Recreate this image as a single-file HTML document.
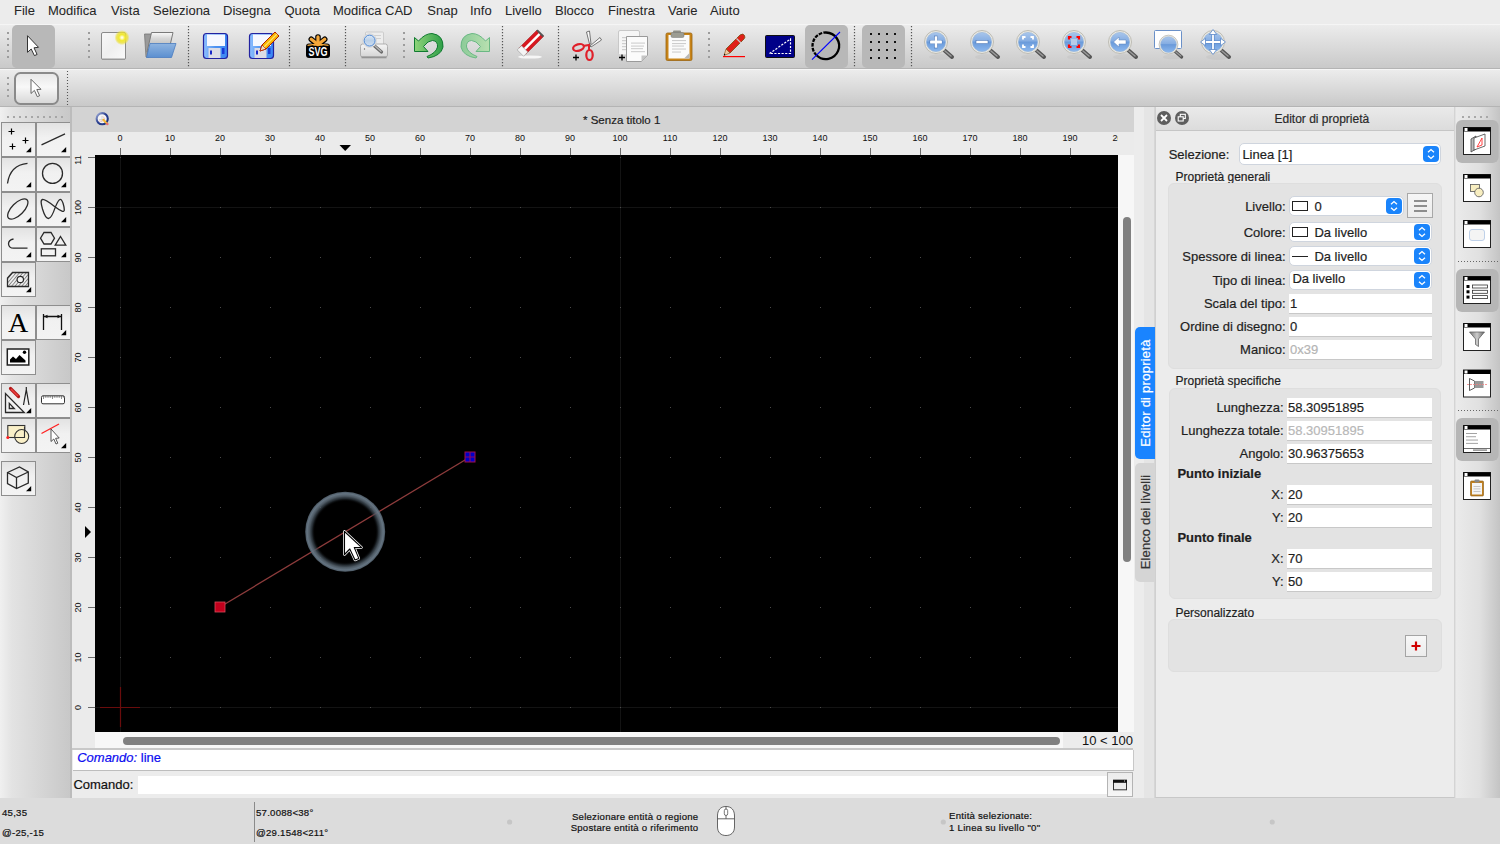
<!DOCTYPE html>
<html><head><meta charset="utf-8">
<style>
*{margin:0;padding:0;box-sizing:border-box}
html,body{width:1500px;height:844px;overflow:hidden;background:#ececec;font-family:"Liberation Sans",sans-serif;color:#222;-webkit-text-stroke:0.2px}
.a{position:absolute}
#menubar{left:0;top:0;width:1500px;height:24px;background:#ececec}
#menubar span{position:absolute;top:3px;font-size:13px;color:#262626;line-height:16px;-webkit-text-stroke:0.05px}
#tb1{left:0;top:24px;width:1500px;height:46px;background:linear-gradient(#f5f5f5 0,#f5f5f5 1px,#ececec 1px,#c9c9c9 44px,#b4b4b4 44px,#b4b4b4 45px,#f6f6f6 45px)}
#tb2{left:0;top:70px;width:1500px;height:37px;background:linear-gradient(#ececec 0,#c9c9c9 36px,#b4b4b4 36px)}
.hdl{position:absolute;width:2px;background:repeating-linear-gradient(#9a9a9a 0 2px,transparent 2px 6px)}
.vsep{position:absolute;width:1px;background:repeating-linear-gradient(#888 0 1px,transparent 1px 3px)}
#leftp{left:0;top:107px;width:72px;height:691px;background:linear-gradient(90deg,#f0f0f0 0,#e3e3e3 12px,#d6d6d6 40px,#c8c8c8 70px,#b8b8b8 70px,#b8b8b8 72px)}
.tbtn{position:absolute;width:35px;height:35px;border:1px solid #8f8f8f;background:linear-gradient(#e6e6e6,#f4f4f4 50%,#f2f2f2)}
.tri{position:absolute;right:3px;bottom:3px;width:0;height:0;border-left:8px solid transparent;border-bottom:8px solid #000}
#doc{left:72px;top:107px;width:1062px;height:691px;background:#ececec}
#doctitle{left:72px;top:107px;width:1062px;height:24px;background:#d4d4d4;font-size:12px;text-align:center;line-height:24px;color:#222}
#canvas{left:95px;top:155px;width:1023px;height:577px;background:#000;overflow:hidden}
#status{left:0;top:798px;width:1500px;height:46px;background:#dcdcdc}
.st{position:absolute;font-size:9.6px;color:#111;line-height:12px;white-space:nowrap;letter-spacing:0.25px}
#sidetabs{left:1134px;top:107px;width:21px;height:691px;background:linear-gradient(90deg,#ececec 0,#ececec 10px,#e4e4e4 10px)}
#prop{left:1155px;top:107px;width:300px;height:691px;background:#ececec;border-left:1px solid #d2d2d2;border-right:1px solid #d2d2d2}
#rtb{left:1455px;top:107px;width:45px;height:691px;background:linear-gradient(90deg,#ececec,#dcdcdc 70%,#c8c8c8)}
</style></head><body>
<div id="menubar" class="a">
<span style="left:14px">File</span><span style="left:48px">Modifica</span><span style="left:111px">Vista</span><span style="left:153px">Seleziona</span><span style="left:223px">Disegna</span><span style="left:284.5px">Quota</span><span style="left:333px">Modifica CAD</span><span style="left:427.3px">Snap</span><span style="left:470px">Info</span><span style="left:505px">Livello</span><span style="left:555px">Blocco</span><span style="left:608px">Finestra</span><span style="left:668px">Varie</span><span style="left:710px">Aiuto</span>
</div>
<div id="tb1" class="a"></div>
<svg class="a" style="left:0;top:24px" width="1500" height="45" viewBox="0 24 1500 45">
<defs>
<linearGradient id="lensg" x1="0" y1="0" x2="0" y2="1"><stop offset="0" stop-color="#a9c6ec"/><stop offset="0.45" stop-color="#85ade2"/><stop offset="0.5" stop-color="#6a9ada"/><stop offset="1" stop-color="#8cb8ee"/></linearGradient>
<linearGradient id="flopg" x1="0" y1="0" x2="1" y2="0"><stop offset="0" stop-color="#8ec0ff"/><stop offset="0.5" stop-color="#4f92f0"/><stop offset="1" stop-color="#3a86f4"/></linearGradient>
<linearGradient id="folderg" x1="0" y1="0" x2="0" y2="1"><stop offset="0" stop-color="#8fb4e0"/><stop offset="1" stop-color="#5b8fd0"/></linearGradient>
<linearGradient id="greeng" x1="0" y1="0" x2="1" y2="0"><stop offset="0" stop-color="#8fd47a"/><stop offset="1" stop-color="#2f9f48"/></linearGradient>
<linearGradient id="greeng2" x1="0" y1="0" x2="1" y2="0"><stop offset="0" stop-color="#8ccb98"/><stop offset="1" stop-color="#b8e0b0"/></linearGradient>
<radialGradient id="yel"><stop offset="0" stop-color="#ffffff"/><stop offset="0.12" stop-color="#fffbd0"/><stop offset="0.4" stop-color="#f2ea30"/><stop offset="0.72" stop-color="#ece030" stop-opacity="0.75"/><stop offset="1" stop-color="#ece030" stop-opacity="0"/></radialGradient><linearGradient id="papg" x1="0" y1="0" x2="0" y2="1"><stop offset="0" stop-color="#fafafa"/><stop offset="0.3" stop-color="#d8d8d8"/><stop offset="1" stop-color="#a8a8a8"/></linearGradient><linearGradient id="pageg" x1="0" y1="0" x2="1" y2="1"><stop offset="0" stop-color="#f8f8f8"/><stop offset="0.5" stop-color="#efefef"/><stop offset="1" stop-color="#fafafa"/></linearGradient>
</defs>
<rect x="7" y="32" width="2" height="2" fill="#9c9c9c"/>
<rect x="7" y="38" width="2" height="2" fill="#9c9c9c"/>
<rect x="7" y="44" width="2" height="2" fill="#9c9c9c"/>
<rect x="7" y="50" width="2" height="2" fill="#9c9c9c"/>
<rect x="7" y="56" width="2" height="2" fill="#9c9c9c"/>
<rect x="88" y="32" width="2" height="2" fill="#9c9c9c"/>
<rect x="88" y="38" width="2" height="2" fill="#9c9c9c"/>
<rect x="88" y="44" width="2" height="2" fill="#9c9c9c"/>
<rect x="88" y="50" width="2" height="2" fill="#9c9c9c"/>
<rect x="88" y="56" width="2" height="2" fill="#9c9c9c"/>
<rect x="403" y="32" width="2" height="2" fill="#9c9c9c"/>
<rect x="403" y="38" width="2" height="2" fill="#9c9c9c"/>
<rect x="403" y="44" width="2" height="2" fill="#9c9c9c"/>
<rect x="403" y="50" width="2" height="2" fill="#9c9c9c"/>
<rect x="403" y="56" width="2" height="2" fill="#9c9c9c"/>
<rect x="708" y="32" width="2" height="2" fill="#9c9c9c"/>
<rect x="708" y="38" width="2" height="2" fill="#9c9c9c"/>
<rect x="708" y="44" width="2" height="2" fill="#9c9c9c"/>
<rect x="708" y="50" width="2" height="2" fill="#9c9c9c"/>
<rect x="708" y="56" width="2" height="2" fill="#9c9c9c"/>
<line x1="188.5" y1="26" x2="188.5" y2="67" stroke="#555" stroke-width="1.2" stroke-dasharray="1.2 1.8"/>
<line x1="289.5" y1="26" x2="289.5" y2="67" stroke="#555" stroke-width="1.2" stroke-dasharray="1.2 1.8"/>
<line x1="345.5" y1="26" x2="345.5" y2="67" stroke="#555" stroke-width="1.2" stroke-dasharray="1.2 1.8"/>
<line x1="502.5" y1="26" x2="502.5" y2="67" stroke="#555" stroke-width="1.2" stroke-dasharray="1.2 1.8"/>
<line x1="558.5" y1="26" x2="558.5" y2="67" stroke="#555" stroke-width="1.2" stroke-dasharray="1.2 1.8"/>
<line x1="854.5" y1="26" x2="854.5" y2="67" stroke="#555" stroke-width="1.2" stroke-dasharray="1.2 1.8"/>
<line x1="911.5" y1="26" x2="911.5" y2="67" stroke="#555" stroke-width="1.2" stroke-dasharray="1.2 1.8"/>
<rect x="12" y="25" width="43" height="43.3" rx="5" fill="#b8b8b8"/>
<rect x="805" y="25" width="43" height="43" rx="5" fill="#b8b8b8"/>
<rect x="862" y="25" width="43" height="43" rx="5" fill="#b8b8b8"/>
<path d="M27.5 35.7 V52.3 L31.2 49 L34.4 55.6 L37.1 54.5 L34 47.8 L38.5 47.3 Z" fill="#fff" stroke="#333" stroke-width="1" stroke-linejoin="round"/>
<rect x="101.5" y="32.5" width="24" height="27" rx="1.5" fill="url(#pageg)" stroke="#8a8a8a" stroke-width="1"/>
<rect x="102.5" y="58.5" width="22" height="1.5" fill="#9a9a9a"/>
<circle cx="122" cy="37.6" r="7.6" fill="url(#yel)"/>
<path d="M144.5 34 L153 34 L149 57 L146 57 Z" fill="#9a9a9a" stroke="#777" stroke-width="0.8"/>
<path d="M151.5 32.5 L173 32.5 L169 50 L147 52 Z" fill="url(#papg)" stroke="#7a7a7a" stroke-width="1"/>

<path d="M150 43.5 L176 43.5 L171.5 57.5 L146.5 57.5 Z" fill="url(#folderg)" stroke="#4a7cc0" stroke-width="0.8"/>
<rect x="203.5" y="33.5" width="24" height="25" rx="3" fill="url(#flopg)" stroke="#2222a0" stroke-width="1.2"/>
<rect x="207" y="34.5" width="18" height="11.5" fill="#f6f8ff"/>
<rect x="208.5" y="48" width="12" height="10" fill="#dcdce6"/>
<rect x="210" y="50.5" width="2" height="4" fill="#1a28c8"/>
<rect x="222" y="48" width="2.5" height="6" fill="#1a3ad8"/>
<rect x="249.5" y="33.5" width="24" height="25" rx="3" fill="url(#flopg)" stroke="#2222a0" stroke-width="1.2"/>
<rect x="253" y="34.5" width="18" height="11.5" fill="#f6f8ff"/>
<rect x="254.5" y="48" width="12" height="10" fill="#dcdce6"/>
<rect x="256" y="50.5" width="2" height="4" fill="#1a28c8"/>
<rect x="268" y="48" width="2.5" height="6" fill="#1a3ad8"/>
<path d="M260 51 L262 45 L275 32 L279 36 L266 49 Z" fill="#f7b500" stroke="#b02000" stroke-width="1"/>
<path d="M262 45 L266 49 L260 51 Z" fill="#f0dcc0" stroke="#b02000" stroke-width="0.8"/>
<path d="M264 47 L277 34" stroke="#ffe070" stroke-width="1.2"/>
<rect x="306" y="43.5" width="24" height="14.5" rx="3" fill="#000"/>
<g stroke="#000" stroke-width="5.6" stroke-linecap="round"><line x1="318" y1="45" x2="318" y2="37"/><line x1="318" y1="45" x2="311.3" y2="39.3"/><line x1="318" y1="45" x2="324.7" y2="39.3"/></g>
<g stroke="#f5a83a" stroke-width="3.3" stroke-linecap="round"><line x1="318" y1="44.5" x2="318" y2="37"/><line x1="318" y1="44.5" x2="311.3" y2="39.3"/><line x1="318" y1="44.5" x2="324.7" y2="39.3"/></g>
<g stroke="#f5a83a" stroke-width="1.6" stroke-linecap="round"><line x1="318" y1="45" x2="314" y2="45"/><line x1="318" y1="45" x2="322" y2="45"/></g>
<path d="M307.5 45.3 Q318 43.3 328.5 45.3" stroke="#f5a83a" stroke-width="1.3" fill="none"/>
<text x="318" y="56.2" font-family="Liberation Sans" font-weight="bold" font-size="11" fill="#fff" text-anchor="middle" transform="translate(318 56) scale(0.82 1.12) translate(-318 -56)">SVG</text>
<!-- pp --><defs><linearGradient id="prg" x1="0" y1="0" x2="0" y2="1"><stop offset="0" stop-color="#f6f6f6"/><stop offset="1" stop-color="#d4d4d4"/></linearGradient>
<linearGradient id="pplens" x1="0" y1="0" x2="0" y2="1"><stop offset="0" stop-color="#dce8f6"/><stop offset="0.5" stop-color="#b8cfe8"/><stop offset="1" stop-color="#d0e0f2"/></linearGradient></defs>
<rect x="365.5" y="32" width="18" height="14" rx="1" fill="#ededed" stroke="#c4c4c4" stroke-width="0.8"/>
<rect x="368" y="35" width="13" height="1" fill="#d0d0d0"/><rect x="368" y="38" width="13" height="1" fill="#d0d0d0"/>
<path d="M362.5 44 H385.5 Q387.5 44 387.5 46.5 V55 Q387.5 57 385.5 57 H362.5 Q360.5 57 360.5 55 V46.5 Q360.5 44 362.5 44 Z" fill="url(#prg)" stroke="#a8a8a8" stroke-width="0.9"/>
<rect x="361.5" y="56.5" width="25" height="1.8" fill="#8a8a8a" opacity="0.8"/>
<circle cx="364.5" cy="49" r="0.7" fill="#666"/>
<line x1="374" y1="45.5" x2="381.5" y2="52" stroke="#6a6a6a" stroke-width="3.2" stroke-linecap="round"/>
<line x1="374.5" y1="45.5" x2="381" y2="51.3" stroke="#b8b8b8" stroke-width="1.2" stroke-linecap="round"/>
<circle cx="369.6" cy="40.6" r="6.8" fill="#f4f4f4" stroke="#c8c8c8" stroke-width="0.7"/>
<circle cx="369.6" cy="40.6" r="5.5" fill="url(#pplens)" stroke="#4a84d0" stroke-width="1"/>
<path d="M414.5 37.5 L414.5 51.5 L428 51.5 L423.5 46.5 Q428 40.5 432.5 40.5 Q438 41 437.5 47 Q436 53 427 56.5 L428 58 Q441 56 443 47 Q443.5 35 432 33.5 Q425 33.5 418.5 41 Z" fill="url(#greeng)" stroke="#107a30" stroke-width="1"/>
<path d="M489.5 37.5 L489.5 51.5 L476 51.5 L480.5 46.5 Q476 40.5 471.5 40.5 Q466 41 466.5 47 Q468 53 477 56.5 L476 58 Q463 56 461 47 Q460.5 35 472 33.5 Q479 33.5 485.5 41 Z" fill="url(#greeng2)" stroke="#6ab884" stroke-width="1"/>
<ellipse cx="530" cy="57" rx="12" ry="1.6" fill="#fff" opacity="0.8"/>
<g transform="rotate(-45 531 42.5)"><rect x="519" y="38" width="25" height="9" fill="#d81820" stroke="#a01010" stroke-width="0.6"/><rect x="519" y="41.3" width="25" height="2.5" fill="#fff"/><rect x="516" y="38" width="6" height="9" fill="#f4f4f4" stroke="#999" stroke-width="0.6"/><rect x="543" y="38" width="2" height="9" fill="#555"/></g>
<path d="M589.5 44 L586.5 32 L589.5 31 L591 44 Z" fill="#fafafa" stroke="#555" stroke-width="0.8"/>
<path d="M590 46 L600 37.5 L601.5 40 L591 47 Z" fill="#fafafa" stroke="#555" stroke-width="0.8"/>
<ellipse cx="578.5" cy="47.5" rx="5.5" ry="3.2" transform="rotate(-15 578.5 47.5)" fill="none" stroke="#e0202a" stroke-width="2.2"/>
<ellipse cx="589.5" cy="55" rx="3.2" ry="5" fill="none" stroke="#e0202a" stroke-width="2.2"/>
<path d="M583 46 L589 45 L589 50" stroke="#e0202a" stroke-width="2" fill="none"/>
<path d="M573 57.5 H579 M576 54.5 V60.5" stroke="#000" stroke-width="1.3"/>
<rect x="618.5" y="30.5" width="21" height="24.5" rx="1.5" fill="#f6f6f6" stroke="#c8c8c8"/>
<rect x="622" y="37" width="4" height="1.2" fill="#cfcfcf"/>
<rect x="622" y="40" width="4" height="1.2" fill="#cfcfcf"/>
<rect x="622" y="43" width="4" height="1.2" fill="#cfcfcf"/>
<rect x="622" y="46" width="4" height="1.2" fill="#cfcfcf"/>
<rect x="622" y="49" width="4" height="1.2" fill="#cfcfcf"/>
<path d="M626.5 36.5 L647.5 36.5 L647.5 55.5 L641.5 61.5 L626.5 61.5 Z" fill="#fbfbfb" stroke="#9a9a9a"/>
<path d="M647.5 55.5 L641.5 55.5 L641.5 61.5 Z" fill="#c4c4c4"/>
<rect x="631" y="42.5" width="14" height="1.2" fill="#d2d2d2"/>
<rect x="631" y="45.5" width="13" height="1.2" fill="#d2d2d2"/>
<rect x="631" y="48" width="12" height="1.2" fill="#d2d2d2"/>
<rect x="631" y="51" width="14" height="1.2" fill="#d2d2d2"/>
<path d="M619 57.5 H625 M622 54.5 V60.5" stroke="#000" stroke-width="1.3"/>
<rect x="666" y="33" width="26" height="27.5" rx="1.5" fill="#c88418" stroke="#9a6410" stroke-width="0.8"/>
<rect x="668.5" y="35" width="21" height="23.5" fill="#fbfbfb"/>
<path d="M689.5 53 L684 58.5 L689.5 58.5 Z" fill="#b8b8b8"/>
<rect x="672" y="40" width="14" height="1.1" fill="#cdcdcd"/>
<rect x="672" y="43" width="14" height="1.1" fill="#cdcdcd"/>
<rect x="672" y="45.5" width="12" height="1.1" fill="#cdcdcd"/>
<rect x="672" y="48.5" width="14" height="1.1" fill="#cdcdcd"/>
<rect x="672" y="51.5" width="9" height="1.1" fill="#cdcdcd"/>
<rect x="673" y="30.5" width="8" height="3" rx="1" fill="#8f8f86"/>
<rect x="671" y="32.5" width="13" height="5" rx="1.5" fill="#9c9c92" stroke="#777" stroke-width="0.5"/>
<path d="M723 56.6 H745" stroke="#ff0000" stroke-width="1.2"/>
<path d="M726 49 L740 35 Q743 33 744.5 35.5 Q745.5 37.5 744 39 L730 53 Z" fill="#e02018" stroke="#7a4a10" stroke-width="0.8"/>
<path d="M736.5 38.5 L741 43" stroke="#c8c8c8" stroke-width="1.3"/>
<path d="M726 49 L730 53 L724 55.5 Z" fill="#f0c8a0" stroke="#7a4a10" stroke-width="0.6"/>
<path d="M724.2 53.5 L725.5 54.8 L724 55.5 Z" fill="#000"/>
<rect x="765.5" y="35.5" width="29" height="22" rx="1" fill="#000088" stroke="#111" stroke-width="1"/>
<path d="M769.5 53.5 L790.5 39 L790.5 53.5 Z" fill="none" stroke="#fff" stroke-width="1.2" stroke-dasharray="2.2 1.4"/>
<path d="M826 32.5 A13.3 13.3 0 1 1 816.5 55.3" fill="none" stroke="#000" stroke-width="2.3"/>
<path d="M816.5 55.3 A13.3 13.3 0 0 1 826 32.5" fill="none" stroke="#000" stroke-width="2.3" stroke-dasharray="3.6 1.2"/>
<line x1="812" y1="59.6" x2="840" y2="32" stroke="#0000ff" stroke-width="1.1"/>
<rect x="870" y="33" width="2" height="2" fill="#111"/>
<rect x="870" y="41" width="2" height="2" fill="#111"/>
<rect x="870" y="49" width="2" height="2" fill="#111"/>
<rect x="870" y="57" width="2" height="2" fill="#111"/>
<rect x="878" y="33" width="2" height="2" fill="#111"/>
<rect x="878" y="41" width="2" height="2" fill="#111"/>
<rect x="878" y="49" width="2" height="2" fill="#111"/>
<rect x="878" y="57" width="2" height="2" fill="#111"/>
<rect x="886" y="33" width="2" height="2" fill="#111"/>
<rect x="886" y="41" width="2" height="2" fill="#111"/>
<rect x="886" y="49" width="2" height="2" fill="#111"/>
<rect x="886" y="57" width="2" height="2" fill="#111"/>
<rect x="894" y="33" width="2" height="2" fill="#111"/>
<rect x="894" y="41" width="2" height="2" fill="#111"/>
<rect x="894" y="49" width="2" height="2" fill="#111"/>
<rect x="894" y="57" width="2" height="2" fill="#111"/>
<g>
<ellipse cx="941" cy="57" rx="12" ry="3" fill="#000" opacity="0.035"/>
<path d="M944 50 L952 57" stroke="#555" stroke-width="4" stroke-linecap="round"/>
<path d="M945 51 L951 56" stroke="#9a9a9a" stroke-width="1.5" stroke-linecap="round"/>
<circle cx="936" cy="42" r="11.5" fill="#e9e8e2" stroke="#bdbcb4" stroke-width="1"/>
<circle cx="936" cy="42" r="9.6" fill="url(#lensg)" stroke="#8fb0d8" stroke-width="0.6"/>
<rect x="930" y="40.3" width="12" height="3.4" fill="#fff" stroke="#3060a8" stroke-width="0.5"/><rect x="934.3" y="36" width="3.4" height="12" fill="#fff" stroke="#3060a8" stroke-width="0.5"/><rect x="930.3" y="40.6" width="11.4" height="2.8" fill="#fff"/>
</g>
<g>
<ellipse cx="987" cy="57" rx="12" ry="3" fill="#000" opacity="0.035"/>
<path d="M990 50 L998 57" stroke="#555" stroke-width="4" stroke-linecap="round"/>
<path d="M991 51 L997 56" stroke="#9a9a9a" stroke-width="1.5" stroke-linecap="round"/>
<circle cx="982" cy="42" r="11.5" fill="#e9e8e2" stroke="#bdbcb4" stroke-width="1"/>
<circle cx="982" cy="42" r="9.6" fill="url(#lensg)" stroke="#8fb0d8" stroke-width="0.6"/>
<rect x="976" y="40.3" width="12" height="3.4" fill="#fff" stroke="#3060a8" stroke-width="0.5"/>
</g>
<g>
<ellipse cx="1033" cy="57" rx="12" ry="3" fill="#000" opacity="0.035"/>
<path d="M1036 50 L1044 57" stroke="#555" stroke-width="4" stroke-linecap="round"/>
<path d="M1037 51 L1043 56" stroke="#9a9a9a" stroke-width="1.5" stroke-linecap="round"/>
<circle cx="1028" cy="42" r="11.5" fill="#e9e8e2" stroke="#bdbcb4" stroke-width="1"/>
<circle cx="1028" cy="42" r="9.6" fill="url(#lensg)" stroke="#8fb0d8" stroke-width="0.6"/>
<path d="M1023 39.5 V37 H1025.5 M1030.5 37 H1033 V39.5 M1033 44.5 V47 H1030.5 M1025.5 47 H1023 V44.5" stroke="#fff" stroke-width="1.8" fill="none"/>
</g>
<g>
<ellipse cx="1079" cy="57" rx="12" ry="3" fill="#000" opacity="0.035"/>
<path d="M1082 50 L1090 57" stroke="#555" stroke-width="4" stroke-linecap="round"/>
<path d="M1083 51 L1089 56" stroke="#9a9a9a" stroke-width="1.5" stroke-linecap="round"/>
<circle cx="1074" cy="42" r="11.5" fill="#e9e8e2" stroke="#bdbcb4" stroke-width="1"/>
<circle cx="1074" cy="42" r="9.6" fill="url(#lensg)" stroke="#8fb0d8" stroke-width="0.6"/>
<rect x="1071" y="39" width="6" height="6" fill="#b8cce8"/><path d="M1069 39.5 V37 H1071.5 M1076.5 37 H1079 V39.5 M1079 44.5 V47 H1076.5 M1071.5 47 H1069 V44.5" stroke="#ff0000" stroke-width="2.2" fill="none"/>
</g>
<g>
<ellipse cx="1125" cy="57" rx="12" ry="3" fill="#000" opacity="0.035"/>
<path d="M1128 50 L1136 57" stroke="#555" stroke-width="4" stroke-linecap="round"/>
<path d="M1129 51 L1135 56" stroke="#9a9a9a" stroke-width="1.5" stroke-linecap="round"/>
<circle cx="1120" cy="42" r="11.5" fill="#e9e8e2" stroke="#bdbcb4" stroke-width="1"/>
<circle cx="1120" cy="42" r="9.6" fill="url(#lensg)" stroke="#8fb0d8" stroke-width="0.6"/>
<path d="M1113.5 42 L1119 37 L1119 40 L1126 40 L1126 44 L1119 44 L1119 47 Z" fill="#fff" stroke="#5a80b8" stroke-width="0.5"/>
</g>
<rect x="1154.5" y="30.5" width="27" height="18" rx="1" fill="#fff" stroke="#6a90c8" stroke-width="1"/>
<g transform="translate(1168.5 44.6) scale(0.82) translate(-1168.5 -44.6)">
<ellipse cx="1173.5" cy="59.6" rx="12" ry="3" fill="#000" opacity="0.035"/>
<path d="M1176.5 52.6 L1184.5 59.6" stroke="#555" stroke-width="4" stroke-linecap="round"/>
<path d="M1177.5 53.6 L1183.5 58.6" stroke="#9a9a9a" stroke-width="1.5" stroke-linecap="round"/>
<circle cx="1168.5" cy="44.6" r="11.5" fill="#e9e8e2" stroke="#bdbcb4" stroke-width="1"/>
<circle cx="1168.5" cy="44.6" r="9.6" fill="url(#lensg)" stroke="#8fb0d8" stroke-width="0.6"/>
</g>
<g>
<ellipse cx="1218" cy="57" rx="12" ry="3" fill="#000" opacity="0.035"/>
<path d="M1221 50 L1229 57" stroke="#555" stroke-width="4" stroke-linecap="round"/>
<path d="M1222 51 L1228 56" stroke="#9a9a9a" stroke-width="1.5" stroke-linecap="round"/>
<circle cx="1213" cy="42" r="11.5" fill="#e9e8e2" stroke="#bdbcb4" stroke-width="1"/>
<circle cx="1213" cy="42" r="9.6" fill="url(#lensg)" stroke="#8fb0d8" stroke-width="0.6"/>
<path d="M1213 33 V51 M1204 42 H1222" stroke="#5a88c8" stroke-width="3.2"/><path d="M1213 33 V51 M1204 42 H1222" stroke="#fff" stroke-width="1.8"/>
<path d="M1213 29.5 L1209.3 34.5 H1216.7 Z M1213 54.5 L1209.3 49.5 H1216.7 Z M1200.5 42 L1205.5 38.3 V45.7 Z M1225.5 42 L1220.5 38.3 V45.7 Z" fill="#fff" stroke="#5a88c8" stroke-width="0.8" stroke-linejoin="round"/>
</g>
</svg>
<div id="tb2" class="a"></div>
<svg class="a" style="left:0;top:69px" width="80" height="38" viewBox="0 69 80 38">
<defs><linearGradient id="b2g" x1="0" y1="0" x2="0" y2="1"><stop offset="0" stop-color="#e6e6e6"/><stop offset="0.45" stop-color="#f8f8f8"/><stop offset="1" stop-color="#d6d6d6"/></linearGradient></defs>
<rect x="7" y="77" width="2" height="2" fill="#a0a0a0"/><rect x="7" y="83" width="2" height="2" fill="#a0a0a0"/><rect x="7" y="89" width="2" height="2" fill="#a0a0a0"/><rect x="7" y="95" width="2" height="2" fill="#a0a0a0"/>
<rect x="15" y="73" width="43" height="31" rx="5.5" fill="url(#b2g)" stroke="#8a8a8a" stroke-width="2"/>
<path d="M31 79.3 V93.5 L34.4 90.4 L37.3 96.7 L39.6 95.7 L36.8 89.5 L41 89.3 Z" fill="#fff" stroke="#555" stroke-width="0.9" stroke-linejoin="round"/>
<line x1="67.5" y1="71" x2="67.5" y2="105" stroke="#555" stroke-width="1.1" stroke-dasharray="1.1 1.9"/>
</svg>
<div id="leftp" class="a"></div>
<svg class="a" style="left:0;top:107px" width="72" height="691" viewBox="0 107 72 691">
<defs><linearGradient id="btng" x1="0" y1="0" x2="0" y2="1"><stop offset="0" stop-color="#e2e2e2"/><stop offset="0.45" stop-color="#f1f1f1"/><stop offset="1" stop-color="#f3f3f3"/></linearGradient></defs>
<rect x="7" y="116" width="2" height="2" fill="#a6a6a6"/>
<rect x="13" y="116" width="2" height="2" fill="#a6a6a6"/>
<rect x="19" y="116" width="2" height="2" fill="#a6a6a6"/>
<rect x="25" y="116" width="2" height="2" fill="#a6a6a6"/>
<rect x="31" y="116" width="2" height="2" fill="#a6a6a6"/>
<rect x="37" y="116" width="2" height="2" fill="#a6a6a6"/>
<rect x="43" y="116" width="2" height="2" fill="#a6a6a6"/>
<rect x="49" y="116" width="2" height="2" fill="#a6a6a6"/>
<rect x="55" y="116" width="2" height="2" fill="#a6a6a6"/>
<rect x="61" y="116" width="2" height="2" fill="#a6a6a6"/>
<rect x="1.5" y="122.5" width="34" height="34" fill="url(#btng)" stroke="#8e8e8e" stroke-width="1"/>
<path d="M31.2 147.0 L31.2 152.2 L26.0 152.2 Z" fill="#000"/>
<rect x="36.5" y="122.5" width="34" height="34" fill="url(#btng)" stroke="#8e8e8e" stroke-width="1"/>
<path d="M66.2 147.0 L66.2 152.2 L61.0 152.2 Z" fill="#000"/>
<rect x="1.5" y="157.5" width="34" height="34" fill="url(#btng)" stroke="#8e8e8e" stroke-width="1"/>
<path d="M31.2 182.0 L31.2 187.2 L26.0 187.2 Z" fill="#000"/>
<rect x="36.5" y="157.5" width="34" height="34" fill="url(#btng)" stroke="#8e8e8e" stroke-width="1"/>
<path d="M66.2 182.0 L66.2 187.2 L61.0 187.2 Z" fill="#000"/>
<rect x="1.5" y="192.5" width="34" height="34" fill="url(#btng)" stroke="#8e8e8e" stroke-width="1"/>
<path d="M31.2 217.0 L31.2 222.2 L26.0 222.2 Z" fill="#000"/>
<rect x="36.5" y="192.5" width="34" height="34" fill="url(#btng)" stroke="#8e8e8e" stroke-width="1"/>
<path d="M66.2 217.0 L66.2 222.2 L61.0 222.2 Z" fill="#000"/>
<rect x="1.5" y="227.5" width="34" height="34" fill="url(#btng)" stroke="#8e8e8e" stroke-width="1"/>
<path d="M31.2 252.0 L31.2 257.2 L26.0 257.2 Z" fill="#000"/>
<rect x="36.5" y="227.5" width="34" height="34" fill="url(#btng)" stroke="#8e8e8e" stroke-width="1"/>
<path d="M66.2 252.0 L66.2 257.2 L61.0 257.2 Z" fill="#000"/>
<rect x="1.5" y="262.5" width="34" height="34" fill="url(#btng)" stroke="#8e8e8e" stroke-width="1"/>
<path d="M31.2 287.0 L31.2 292.2 L26.0 292.2 Z" fill="#000"/>
<rect x="1.5" y="305.5" width="34" height="34" fill="url(#btng)" stroke="#8e8e8e" stroke-width="1"/>
<rect x="36.5" y="305.5" width="34" height="34" fill="url(#btng)" stroke="#8e8e8e" stroke-width="1"/>
<path d="M66.2 330.0 L66.2 335.2 L61.0 335.2 Z" fill="#000"/>
<rect x="1.5" y="340.5" width="34" height="34" fill="url(#btng)" stroke="#8e8e8e" stroke-width="1"/>
<rect x="1.5" y="383.5" width="34" height="34" fill="url(#btng)" stroke="#8e8e8e" stroke-width="1"/>
<path d="M31.2 408.0 L31.2 413.2 L26.0 413.2 Z" fill="#000"/>
<rect x="36.5" y="383.5" width="34" height="34" fill="url(#btng)" stroke="#8e8e8e" stroke-width="1"/>
<rect x="1.5" y="418.5" width="34" height="34" fill="url(#btng)" stroke="#8e8e8e" stroke-width="1"/>
<rect x="36.5" y="418.5" width="34" height="34" fill="url(#btng)" stroke="#8e8e8e" stroke-width="1"/>
<path d="M66.2 443.0 L66.2 448.2 L61.0 448.2 Z" fill="#000"/>
<rect x="1.5" y="461.5" width="34" height="34" fill="url(#btng)" stroke="#8e8e8e" stroke-width="1"/>
<path d="M31.2 486.0 L31.2 491.2 L26.0 491.2 Z" fill="#000"/>
<path d="M8.5 131.5 H14.5 M11.5 128.5 V134.5" stroke="#000" stroke-width="1.2"/>
<path d="M22.5 140.5 H28.5 M25.5 137.5 V143.5" stroke="#000" stroke-width="1.2"/>
<path d="M9.5 146.5 H15.5 M12.5 143.5 V149.5" stroke="#000" stroke-width="1.2"/>
<path d="M41.5 144.8 L65 133.8" stroke="#2a2a2a" stroke-width="1.3" fill="none"/>
<path d="M7.5 183.5 Q10 165 27.5 163.3" stroke="#2a2a2a" stroke-width="1.3" fill="none"/>
<circle cx="52.5" cy="173.4" r="10" stroke="#2a2a2a" stroke-width="1.3" fill="none"/>
<ellipse cx="17.8" cy="209" rx="13" ry="6" transform="rotate(-45 17.8 209)" stroke="#2a2a2a" stroke-width="1.3" fill="none"/>
<path d="M55.3 207.1 C57 203 58.5 199.3 60.3 199.3 C62.5 199.3 64.3 207 64.3 210 C64.3 212.5 61 211.5 55.3 207.1 C50 203 45 199 42.5 199.5 C40 200 41.5 205 42.5 209 C44 214 46.5 218.5 48.5 218.5 C51 218.5 54 211 55.3 207.1 Z" stroke="#2a2a2a" stroke-width="1.3" fill="none"/>
<path d="M13.5 239 Q8.5 240 8.5 244 Q9 248.2 13.5 248.2 H27.5" stroke="#2a2a2a" stroke-width="1.3" fill="none"/>
<path d="M44 232.5 H51 L54.5 238.2 L51 244 H44 L40.5 238.2 Z" stroke="#2a2a2a" stroke-width="1.3" fill="none"/>
<path d="M60.5 236.5 L65.8 245.2 H55.2 Z" stroke="#2a2a2a" stroke-width="1.3" fill="none"/>
<rect x="41.3" y="248.8" width="14.2" height="7" stroke="#2a2a2a" stroke-width="1.3" fill="none"/>
<defs><pattern id="hp" width="2.6" height="3" patternUnits="userSpaceOnUse" patternTransform="rotate(40)"><rect width="2.6" height="3" fill="#f0f0f0"/><line x1="0.5" y1="0" x2="0.5" y2="3" stroke="#6a6a6a" stroke-width="0.8"/></pattern></defs>
<path d="M7.5 286.5 V278 L12.5 272.5 H28.5 V286.5 Z" fill="url(#hp)" stroke="#2a2a2a" stroke-width="1.3"/>
<circle cx="20.3" cy="279.5" r="3.2" fill="#f2f2f2" stroke="#2a2a2a" stroke-width="1.2"/>
<text x="18" y="332" font-family="Liberation Serif" font-size="28" text-anchor="middle" fill="#000">A</text>
<path d="M43.5 314 V330 M61.5 314 V330 M44 316.5 H61" stroke="#111" stroke-width="1.3" fill="none"/>
<path d="M44 316.5 L47.5 314.8 V318.2 Z M61 316.5 L57.5 314.8 V318.2 Z" fill="#111"/>
<rect x="7.3" y="349" width="21.5" height="16" fill="#fff" stroke="#222" stroke-width="1.5"/>
<path d="M10 362.5 V359.5 L13 356.5 L16 359 L19.5 355 L25.5 360.5 V362.5 Z" fill="#000"/>
<circle cx="24.5" cy="352.3" r="1.7" fill="#000"/>
<path d="M5.5 393.5 V412.5 H24.3 Z" stroke="#2a2a2a" stroke-width="1.3" fill="none"/>
<path d="M9.3 403.3 V408.5 H14.3 Z" stroke="#2a2a2a" stroke-width="1.3" fill="none"/>
<path d="M10.5 388.5 L18.5 396.5" stroke="#b01818" stroke-width="3.2" stroke-linecap="round"/>
<path d="M11 389 L18 396" stroke="#ee4040" stroke-width="1.5"/>
<path d="M26.3 387 V390 M26.3 389.5 L23.5 405 M26.3 389.5 L29 405" stroke="#222" stroke-width="1.2" fill="none"/>
<rect x="41.5" y="395.8" width="23" height="8" rx="1.5" fill="#fff" stroke="#333" stroke-width="1"/>
<line x1="43.5" y1="396" x2="43.5" y2="399" stroke="#444" stroke-width="0.6"/>
<line x1="45.3" y1="396" x2="45.3" y2="397.8" stroke="#444" stroke-width="0.6"/>
<line x1="47.1" y1="396" x2="47.1" y2="397.8" stroke="#444" stroke-width="0.6"/>
<line x1="48.9" y1="396" x2="48.9" y2="397.8" stroke="#444" stroke-width="0.6"/>
<line x1="50.7" y1="396" x2="50.7" y2="397.8" stroke="#444" stroke-width="0.6"/>
<line x1="52.5" y1="396" x2="52.5" y2="399" stroke="#444" stroke-width="0.6"/>
<line x1="54.3" y1="396" x2="54.3" y2="397.8" stroke="#444" stroke-width="0.6"/>
<line x1="56.1" y1="396" x2="56.1" y2="397.8" stroke="#444" stroke-width="0.6"/>
<line x1="57.9" y1="396" x2="57.9" y2="397.8" stroke="#444" stroke-width="0.6"/>
<line x1="59.7" y1="396" x2="59.7" y2="397.8" stroke="#444" stroke-width="0.6"/>
<line x1="61.5" y1="396" x2="61.5" y2="399" stroke="#444" stroke-width="0.6"/>
<line x1="63.3" y1="396" x2="63.3" y2="397.8" stroke="#444" stroke-width="0.6"/>
<rect x="7.8" y="425.5" width="17" height="12" fill="#faf0c8" stroke="#333" stroke-width="1.1"/>
<circle cx="21.7" cy="436.5" r="7" fill="#faf0c8" stroke="#333" stroke-width="1.1"/>
<path d="M14.8 437.5 H24.5 V427" stroke="#333" stroke-width="1.1" fill="none"/>
<circle cx="7.8" cy="437.5" r="1.5" fill="#ff2020"/>
<path d="M41.5 433.5 L59 424" stroke="#ff2020" stroke-width="1.3"/>
<path d="M51 429 V441.5 L53.8 439 L56 444 L57.8 443.2 L55.6 438.3 L59.2 438 Z" fill="#fff" stroke="#444" stroke-width="0.9" stroke-linejoin="round"/>
<path d="M7.5 472.5 L19.5 467 L28.3 472 V483 L16.5 488.5 L7.5 483.5 Z M7.5 472.5 L16.5 477.5 L28.3 472 M16.5 477.5 V488.5" stroke="#2a2a2a" stroke-width="1.3" fill="none"/>
</svg>
<div id="doc" class="a"></div>

<svg class="a" style="left:72px;top:107px" width="1062" height="691" viewBox="72 107 1062 691">
<defs>
<radialGradient id="ring" cx="345.2" cy="531.8" r="39.6" gradientUnits="userSpaceOnUse">
<stop offset="0" stop-color="#000" stop-opacity="0"/>
<stop offset="0.76" stop-color="#000" stop-opacity="0"/>
<stop offset="0.84" stop-color="#3c4852" stop-opacity="0.6"/>
<stop offset="0.90" stop-color="#56636e" stop-opacity="0.9"/>
<stop offset="0.96" stop-color="#6a7a88" stop-opacity="0.95"/>
<stop offset="1" stop-color="#5a6976" stop-opacity="0.9"/>
</radialGradient></defs>
<rect x="72" y="107" width="1062" height="25" fill="#d3d3d3"/>
<rect x="72" y="132" width="1062" height="23" fill="#ebebeb"/>
<rect x="72" y="155" width="23" height="593" fill="#ebebeb"/>
<rect x="1118" y="155" width="16" height="577" fill="#f7f7f7"/>
<rect x="95" y="732" width="968" height="16" fill="#f7f7f7"/>
<rect x="95" y="155" width="1023" height="577" fill="#000"/>
<path d="M120.5 155 V732 M620.5 155 V732 M95 707.5 H1118 M95 207.5 H1118" stroke="#131313" stroke-width="1"/>
<path d="M120 707h1v1h-1zM120 657h1v1h-1zM120 607h1v1h-1zM120 557h1v1h-1zM120 507h1v1h-1zM120 457h1v1h-1zM120 407h1v1h-1zM120 357h1v1h-1zM120 307h1v1h-1zM120 257h1v1h-1zM120 207h1v1h-1zM120 157h1v1h-1zM170 707h1v1h-1zM170 657h1v1h-1zM170 607h1v1h-1zM170 557h1v1h-1zM170 507h1v1h-1zM170 457h1v1h-1zM170 407h1v1h-1zM170 357h1v1h-1zM170 307h1v1h-1zM170 257h1v1h-1zM170 207h1v1h-1zM170 157h1v1h-1zM220 707h1v1h-1zM220 657h1v1h-1zM220 607h1v1h-1zM220 557h1v1h-1zM220 507h1v1h-1zM220 457h1v1h-1zM220 407h1v1h-1zM220 357h1v1h-1zM220 307h1v1h-1zM220 257h1v1h-1zM220 207h1v1h-1zM220 157h1v1h-1zM270 707h1v1h-1zM270 657h1v1h-1zM270 607h1v1h-1zM270 557h1v1h-1zM270 507h1v1h-1zM270 457h1v1h-1zM270 407h1v1h-1zM270 357h1v1h-1zM270 307h1v1h-1zM270 257h1v1h-1zM270 207h1v1h-1zM270 157h1v1h-1zM320 707h1v1h-1zM320 657h1v1h-1zM320 607h1v1h-1zM320 557h1v1h-1zM320 507h1v1h-1zM320 457h1v1h-1zM320 407h1v1h-1zM320 357h1v1h-1zM320 307h1v1h-1zM320 257h1v1h-1zM320 207h1v1h-1zM320 157h1v1h-1zM370 707h1v1h-1zM370 657h1v1h-1zM370 607h1v1h-1zM370 557h1v1h-1zM370 507h1v1h-1zM370 457h1v1h-1zM370 407h1v1h-1zM370 357h1v1h-1zM370 307h1v1h-1zM370 257h1v1h-1zM370 207h1v1h-1zM370 157h1v1h-1zM420 707h1v1h-1zM420 657h1v1h-1zM420 607h1v1h-1zM420 557h1v1h-1zM420 507h1v1h-1zM420 457h1v1h-1zM420 407h1v1h-1zM420 357h1v1h-1zM420 307h1v1h-1zM420 257h1v1h-1zM420 207h1v1h-1zM420 157h1v1h-1zM470 707h1v1h-1zM470 657h1v1h-1zM470 607h1v1h-1zM470 557h1v1h-1zM470 507h1v1h-1zM470 457h1v1h-1zM470 407h1v1h-1zM470 357h1v1h-1zM470 307h1v1h-1zM470 257h1v1h-1zM470 207h1v1h-1zM470 157h1v1h-1zM520 707h1v1h-1zM520 657h1v1h-1zM520 607h1v1h-1zM520 557h1v1h-1zM520 507h1v1h-1zM520 457h1v1h-1zM520 407h1v1h-1zM520 357h1v1h-1zM520 307h1v1h-1zM520 257h1v1h-1zM520 207h1v1h-1zM520 157h1v1h-1zM570 707h1v1h-1zM570 657h1v1h-1zM570 607h1v1h-1zM570 557h1v1h-1zM570 507h1v1h-1zM570 457h1v1h-1zM570 407h1v1h-1zM570 357h1v1h-1zM570 307h1v1h-1zM570 257h1v1h-1zM570 207h1v1h-1zM570 157h1v1h-1zM620 707h1v1h-1zM620 657h1v1h-1zM620 607h1v1h-1zM620 557h1v1h-1zM620 507h1v1h-1zM620 457h1v1h-1zM620 407h1v1h-1zM620 357h1v1h-1zM620 307h1v1h-1zM620 257h1v1h-1zM620 207h1v1h-1zM620 157h1v1h-1zM670 707h1v1h-1zM670 657h1v1h-1zM670 607h1v1h-1zM670 557h1v1h-1zM670 507h1v1h-1zM670 457h1v1h-1zM670 407h1v1h-1zM670 357h1v1h-1zM670 307h1v1h-1zM670 257h1v1h-1zM670 207h1v1h-1zM670 157h1v1h-1zM720 707h1v1h-1zM720 657h1v1h-1zM720 607h1v1h-1zM720 557h1v1h-1zM720 507h1v1h-1zM720 457h1v1h-1zM720 407h1v1h-1zM720 357h1v1h-1zM720 307h1v1h-1zM720 257h1v1h-1zM720 207h1v1h-1zM720 157h1v1h-1zM770 707h1v1h-1zM770 657h1v1h-1zM770 607h1v1h-1zM770 557h1v1h-1zM770 507h1v1h-1zM770 457h1v1h-1zM770 407h1v1h-1zM770 357h1v1h-1zM770 307h1v1h-1zM770 257h1v1h-1zM770 207h1v1h-1zM770 157h1v1h-1zM820 707h1v1h-1zM820 657h1v1h-1zM820 607h1v1h-1zM820 557h1v1h-1zM820 507h1v1h-1zM820 457h1v1h-1zM820 407h1v1h-1zM820 357h1v1h-1zM820 307h1v1h-1zM820 257h1v1h-1zM820 207h1v1h-1zM820 157h1v1h-1zM870 707h1v1h-1zM870 657h1v1h-1zM870 607h1v1h-1zM870 557h1v1h-1zM870 507h1v1h-1zM870 457h1v1h-1zM870 407h1v1h-1zM870 357h1v1h-1zM870 307h1v1h-1zM870 257h1v1h-1zM870 207h1v1h-1zM870 157h1v1h-1zM920 707h1v1h-1zM920 657h1v1h-1zM920 607h1v1h-1zM920 557h1v1h-1zM920 507h1v1h-1zM920 457h1v1h-1zM920 407h1v1h-1zM920 357h1v1h-1zM920 307h1v1h-1zM920 257h1v1h-1zM920 207h1v1h-1zM920 157h1v1h-1zM970 707h1v1h-1zM970 657h1v1h-1zM970 607h1v1h-1zM970 557h1v1h-1zM970 507h1v1h-1zM970 457h1v1h-1zM970 407h1v1h-1zM970 357h1v1h-1zM970 307h1v1h-1zM970 257h1v1h-1zM970 207h1v1h-1zM970 157h1v1h-1zM1020 707h1v1h-1zM1020 657h1v1h-1zM1020 607h1v1h-1zM1020 557h1v1h-1zM1020 507h1v1h-1zM1020 457h1v1h-1zM1020 407h1v1h-1zM1020 357h1v1h-1zM1020 307h1v1h-1zM1020 257h1v1h-1zM1020 207h1v1h-1zM1020 157h1v1h-1zM1070 707h1v1h-1zM1070 657h1v1h-1zM1070 607h1v1h-1zM1070 557h1v1h-1zM1070 507h1v1h-1zM1070 457h1v1h-1zM1070 407h1v1h-1zM1070 357h1v1h-1zM1070 307h1v1h-1zM1070 257h1v1h-1zM1070 207h1v1h-1zM1070 157h1v1h-1z" fill="#4a4a4a"/>
<path d="M100 707.5 H140 M120.5 687 V727" stroke="#6a0c0c" stroke-width="1.2"/>
<path d="M120.5 148 V155M170.5 148 V155M220.5 148 V155M270.5 148 V155M320.5 148 V155M370.5 148 V155M420.5 148 V155M470.5 148 V155M520.5 148 V155M570.5 148 V155M620.5 148 V155M670.5 148 V155M720.5 148 V155M770.5 148 V155M820.5 148 V155M870.5 148 V155M920.5 148 V155M970.5 148 V155M1020.5 148 V155M1070.5 148 V155" stroke="#6a6a6a" stroke-width="1"/>
<text x="120" y="141" font-size="9" text-anchor="middle" fill="#111">0</text>
<text x="170" y="141" font-size="9" text-anchor="middle" fill="#111">10</text>
<text x="220" y="141" font-size="9" text-anchor="middle" fill="#111">20</text>
<text x="270" y="141" font-size="9" text-anchor="middle" fill="#111">30</text>
<text x="320" y="141" font-size="9" text-anchor="middle" fill="#111">40</text>
<text x="370" y="141" font-size="9" text-anchor="middle" fill="#111">50</text>
<text x="420" y="141" font-size="9" text-anchor="middle" fill="#111">60</text>
<text x="470" y="141" font-size="9" text-anchor="middle" fill="#111">70</text>
<text x="520" y="141" font-size="9" text-anchor="middle" fill="#111">80</text>
<text x="570" y="141" font-size="9" text-anchor="middle" fill="#111">90</text>
<text x="620" y="141" font-size="9" text-anchor="middle" fill="#111">100</text>
<text x="670" y="141" font-size="9" text-anchor="middle" fill="#111">110</text>
<text x="720" y="141" font-size="9" text-anchor="middle" fill="#111">120</text>
<text x="770" y="141" font-size="9" text-anchor="middle" fill="#111">130</text>
<text x="820" y="141" font-size="9" text-anchor="middle" fill="#111">140</text>
<text x="870" y="141" font-size="9" text-anchor="middle" fill="#111">150</text>
<text x="920" y="141" font-size="9" text-anchor="middle" fill="#111">160</text>
<text x="970" y="141" font-size="9" text-anchor="middle" fill="#111">170</text>
<text x="1020" y="141" font-size="9" text-anchor="middle" fill="#111">180</text>
<text x="1070" y="141" font-size="9" text-anchor="middle" fill="#111">190</text>
<svg x="1100" y="130" width="18" height="20" viewBox="1100 130 18 20" overflow="hidden"><text x="1120" y="141" font-size="9" text-anchor="middle" fill="#111">200</text></svg>
<path d="M88 707.5 H95M88 657.5 H95M88 607.5 H95M88 557.5 H95M88 507.5 H95M88 457.5 H95M88 407.5 H95M88 357.5 H95M88 307.5 H95M88 257.5 H95M88 207.5 H95M88 157.5 H95" stroke="#6a6a6a" stroke-width="1"/>
<text x="0" y="0" font-size="9" text-anchor="middle" fill="#111" transform="translate(81.3 707.5) rotate(-90)">0</text>
<text x="0" y="0" font-size="9" text-anchor="middle" fill="#111" transform="translate(81.3 657.5) rotate(-90)">10</text>
<text x="0" y="0" font-size="9" text-anchor="middle" fill="#111" transform="translate(81.3 607.5) rotate(-90)">20</text>
<text x="0" y="0" font-size="9" text-anchor="middle" fill="#111" transform="translate(81.3 557.5) rotate(-90)">30</text>
<text x="0" y="0" font-size="9" text-anchor="middle" fill="#111" transform="translate(81.3 507.5) rotate(-90)">40</text>
<text x="0" y="0" font-size="9" text-anchor="middle" fill="#111" transform="translate(81.3 457.5) rotate(-90)">50</text>
<text x="0" y="0" font-size="9" text-anchor="middle" fill="#111" transform="translate(81.3 407.5) rotate(-90)">60</text>
<text x="0" y="0" font-size="9" text-anchor="middle" fill="#111" transform="translate(81.3 357.5) rotate(-90)">70</text>
<text x="0" y="0" font-size="9" text-anchor="middle" fill="#111" transform="translate(81.3 307.5) rotate(-90)">80</text>
<text x="0" y="0" font-size="9" text-anchor="middle" fill="#111" transform="translate(81.3 257.5) rotate(-90)">90</text>
<text x="0" y="0" font-size="9" text-anchor="middle" fill="#111" transform="translate(81.3 207.5) rotate(-90)">100</text>
<svg x="70" y="155" width="25" height="20" viewBox="70 155 25 20" overflow="hidden"><text x="0" y="0" font-size="9" text-anchor="middle" fill="#111" transform="translate(81.3 157.5) rotate(-90)">110</text></svg>
<path d="M339.5 145 H351 L345.2 151 Z" fill="#000"/>
<path d="M85 526 V538 L91 532 Z" fill="#000"/>
<rect x="1123" y="217" width="8" height="345" rx="4" fill="#808080"/>
<rect x="123" y="737" width="937" height="8" rx="4" fill="#808080"/>
<text x="1133" y="745" font-size="13" text-anchor="end" fill="#111">10 &lt; 100</text>
<line x1="220" y1="607" x2="470" y2="457" stroke="#8e3c3c" stroke-width="1.3"/>
<rect x="215" y="602" width="10" height="10" fill="#c2001c" stroke="#d84a5a" stroke-width="0.8"/>
<rect x="465" y="452" width="10" height="10" fill="#0000c8" stroke="#a01050" stroke-width="1"/>
<path d="M470 452 V462 M465 457 H475" stroke="#8a0860" stroke-width="1.2"/>
<circle cx="345.2" cy="531.8" r="40" fill="url(#ring)"/>
<path d="M344.5 531.5 V554.5 L349.8 549 L355 560 L358.8 558.4 L354.3 547.6 L361.5 547.4 Z" fill="#fff" stroke="#fff" stroke-width="2.6" stroke-linejoin="round"/><path d="M344.5 531.5 V554.5 L349.8 549 L355 560 L358.8 558.4 L354.3 547.6 L361.5 547.4 Z" fill="#fff" stroke="#000" stroke-width="1.1" stroke-linejoin="round"/>
</svg>

<div class="a" style="left:1155px;top:107px;width:300px;height:691px;background:#ececec;border-left:1px solid #d0d0d0;border-right:1px solid #d4d4d4;border-bottom:1px solid #c8c8c8"></div>
<div class="a" style="left:1156px;top:108px;width:298px;height:23px;background:linear-gradient(#e9e9e9,#dcdcdc);border-bottom:1px solid #c6c6c6"></div>
<div class="a" style="left:1274.5px;top:110.5px;font-size:12px;line-height:16px;color:#2a2a2a">Editor di proprietà</div>
<svg class="a" style="left:1155px;top:107px" width="40" height="24" viewBox="1155 107 40 24">
<circle cx="1164" cy="118" r="7" fill="#5e5e5e"/><path d="M1161 115 L1167 121 M1167 115 L1161 121" stroke="#fff" stroke-width="1.8"/>
<circle cx="1182" cy="118" r="7" fill="#5e5e5e"/><rect x="1180.3" y="114.3" width="5" height="4.2" fill="none" stroke="#fff" stroke-width="1.1"/><rect x="1178.2" y="116.8" width="5" height="4.2" fill="#5e5e5e" stroke="#fff" stroke-width="1.1"/>
</svg>
<div class="a" style="left:1168.7px;top:146.7px;font-size:13px;line-height:16px;color:#1e1e1e;white-space:nowrap;">Selezione:</div>
<div class="a" style="left:1238.5px;top:143px;width:202px;height:22px;background:#fff;border:1px solid #cfd5de;border-radius:5px"></div>
<div class="a" style="left:1242.4px;top:146.7px;font-size:13px;line-height:16px;color:#1e1e1e;white-space:nowrap;">Linea [1]</div>
<svg class="a" style="left:1422.5px;top:146px" width="16" height="16" viewBox="0 0 16 16"><rect width="16" height="16" rx="4" fill="#1a84fb"/><path d="M5 6.3 L8 3.6 L11 6.3 M5 9.7 L8 12.4 L11 9.7" stroke="#fff" stroke-width="1.3" fill="none"/></svg>
<div class="a" style="left:1175.5px;top:168.8px;font-size:12px;line-height:16px;color:#1e1e1e;white-space:nowrap;">Proprietà generali</div>
<div class="a" style="left:1168px;top:183px;width:273.5px;height:185.5px;background:#e3e3e3;border:1px solid #dedede;border-radius:6px"></div>
<div class="a" style="right:214.4000000000001px;top:198.5px;font-size:13px;line-height:16px;color:#1e1e1e;white-space:nowrap;">Livello:</div>
<div class="a" style="right:214.4000000000001px;top:224.5px;font-size:13px;line-height:16px;color:#1e1e1e;white-space:nowrap;">Colore:</div>
<div class="a" style="right:214.4000000000001px;top:248.5px;font-size:13px;line-height:16px;color:#1e1e1e;white-space:nowrap;">Spessore di linea:</div>
<div class="a" style="right:214.4000000000001px;top:272.5px;font-size:13px;line-height:16px;color:#1e1e1e;white-space:nowrap;">Tipo di linea:</div>
<div class="a" style="right:214.4000000000001px;top:296.2px;font-size:13px;line-height:16px;color:#1e1e1e;white-space:nowrap;">Scala del tipo:</div>
<div class="a" style="right:214.4000000000001px;top:319.2px;font-size:13px;line-height:16px;color:#1e1e1e;white-space:nowrap;">Ordine di disegno:</div>
<div class="a" style="right:214.4000000000001px;top:342.2px;font-size:13px;line-height:16px;color:#1e1e1e;white-space:nowrap;">Manico:</div>
<div class="a" style="left:1289px;top:195.7px;width:115px;height:20.6px;background:#fff;border:1px solid #cfd5de;border-radius:5px"></div>
<svg class="a" style="left:1386px;top:198px" width="16" height="16" viewBox="0 0 16 16"><rect width="16" height="16" rx="4" fill="#1a84fb"/><path d="M5 6.3 L8 3.6 L11 6.3 M5 9.7 L8 12.4 L11 9.7" stroke="#fff" stroke-width="1.3" fill="none"/></svg>
<div class="a" style="left:1407.4px;top:193.3px;width:25.4px;height:25px;background:linear-gradient(#f6f6f6,#ececec);border:1px solid #a8a8a8"></div>
<svg class="a" style="left:1407px;top:193px" width="26" height="26" viewBox="0 0 26 26"><path d="M7 8 H20 M7 13 H20 M7 18 H20" stroke="#6e6e6e" stroke-width="1.6"/></svg>
<div class="a" style="left:1289px;top:221.8px;width:143.3px;height:20.4px;background:#fff;border:1px solid #cfd5de;border-radius:5px"></div>
<svg class="a" style="left:1414px;top:224.0px" width="16" height="16" viewBox="0 0 16 16"><rect width="16" height="16" rx="4" fill="#1a84fb"/><path d="M5 6.3 L8 3.6 L11 6.3 M5 9.7 L8 12.4 L11 9.7" stroke="#fff" stroke-width="1.3" fill="none"/></svg>
<div class="a" style="left:1289px;top:245.7px;width:143.3px;height:20.4px;background:#fff;border:1px solid #cfd5de;border-radius:5px"></div>
<svg class="a" style="left:1414px;top:247.89999999999998px" width="16" height="16" viewBox="0 0 16 16"><rect width="16" height="16" rx="4" fill="#1a84fb"/><path d="M5 6.3 L8 3.6 L11 6.3 M5 9.7 L8 12.4 L11 9.7" stroke="#fff" stroke-width="1.3" fill="none"/></svg>
<div class="a" style="left:1289px;top:269.6px;width:143.3px;height:20.4px;background:#fff;border:1px solid #cfd5de;border-radius:5px"></div>
<svg class="a" style="left:1414px;top:271.8px" width="16" height="16" viewBox="0 0 16 16"><rect width="16" height="16" rx="4" fill="#1a84fb"/><path d="M5 6.3 L8 3.6 L11 6.3 M5 9.7 L8 12.4 L11 9.7" stroke="#fff" stroke-width="1.3" fill="none"/></svg>
<div class="a" style="left:1292px;top:201.3px;width:16px;height:9.5px;border:1px solid #222"></div>
<div class="a" style="left:1292px;top:227.3px;width:16px;height:9.5px;border:1px solid #222"></div>
<div class="a" style="left:1292px;top:255.8px;width:16px;height:1.2px;background:#222"></div>
<div class="a" style="left:1314.4px;top:198.5px;font-size:13px;line-height:16px;color:#1e1e1e;white-space:nowrap;">0</div>
<div class="a" style="left:1314.4px;top:224.5px;font-size:13px;line-height:16px;color:#1e1e1e;white-space:nowrap;">Da livello</div>
<div class="a" style="left:1314.4px;top:248.5px;font-size:13px;line-height:16px;color:#1e1e1e;white-space:nowrap;">Da livello</div>
<div class="a" style="left:1292.4px;top:271.3px;font-size:13px;line-height:16px;color:#1e1e1e;white-space:nowrap;">Da livello</div>
<div class="a" style="left:1289px;top:293.9px;width:143.20000000000005px;height:19.30000000000001px;background:#fff;box-shadow:0 1px 0 #c8c8c8"></div>
<div class="a" style="left:1289px;top:317px;width:143.20000000000005px;height:19.399999999999977px;background:#fff;box-shadow:0 1px 0 #c8c8c8"></div>
<div class="a" style="left:1289px;top:340.3px;width:143.20000000000005px;height:18.899999999999977px;background:#fff;box-shadow:0 1px 0 #c8c8c8"></div>
<div class="a" style="left:1290px;top:296.2px;font-size:13px;line-height:16px;color:#1e1e1e;white-space:nowrap;">1</div>
<div class="a" style="left:1290px;top:319.2px;font-size:13px;line-height:16px;color:#1e1e1e;white-space:nowrap;">0</div>
<div class="a" style="left:1290px;top:342.2px;font-size:13px;line-height:16px;color:#b4b4b4;white-space:nowrap;">0x39</div>
<div class="a" style="left:1175.5px;top:373.2px;font-size:12px;line-height:16px;color:#1e1e1e;white-space:nowrap;">Proprietà specifiche</div>
<div class="a" style="left:1168.5px;top:387.6px;width:272.5px;height:211px;background:#e3e3e3;border:1px solid #dedede;border-radius:6px"></div>
<div class="a" style="right:216.4000000000001px;top:399.5px;font-size:13px;line-height:16px;color:#1e1e1e;white-space:nowrap;">Lunghezza:</div>
<div class="a" style="right:216.4000000000001px;top:422.5px;font-size:13px;line-height:16px;color:#1e1e1e;white-space:nowrap;">Lunghezza totale:</div>
<div class="a" style="right:216.4000000000001px;top:445.5px;font-size:13px;line-height:16px;color:#1e1e1e;white-space:nowrap;">Angolo:</div>
<div class="a" style="left:1286.8px;top:398px;width:145.0px;height:18.899999999999977px;background:#fff;box-shadow:0 1px 0 #c8c8c8"></div>
<div class="a" style="left:1286.8px;top:421.1px;width:145.0px;height:18.599999999999966px;background:#fff;box-shadow:0 1px 0 #c8c8c8"></div>
<div class="a" style="left:1286.8px;top:444.2px;width:145.0px;height:18.69999999999999px;background:#fff;box-shadow:0 1px 0 #c8c8c8"></div>
<div class="a" style="left:1286.8px;top:485.2px;width:145.0px;height:18.69999999999999px;background:#fff;box-shadow:0 1px 0 #c8c8c8"></div>
<div class="a" style="left:1286.8px;top:508.1px;width:145.0px;height:18.699999999999932px;background:#fff;box-shadow:0 1px 0 #c8c8c8"></div>
<div class="a" style="left:1286.8px;top:549.2px;width:145.0px;height:18.59999999999991px;background:#fff;box-shadow:0 1px 0 #c8c8c8"></div>
<div class="a" style="left:1286.8px;top:572px;width:145.0px;height:18.700000000000045px;background:#fff;box-shadow:0 1px 0 #c8c8c8"></div>
<div class="a" style="left:1288px;top:399.5px;font-size:13px;line-height:16px;color:#1e1e1e;white-space:nowrap;">58.30951895</div>
<div class="a" style="left:1288px;top:422.5px;font-size:13px;line-height:16px;color:#b8b8b8;white-space:nowrap;">58.30951895</div>
<div class="a" style="left:1288px;top:445.5px;font-size:13px;line-height:16px;color:#1e1e1e;white-space:nowrap;">30.96375653</div>
<div class="a" style="left:1177.4px;top:466.3px;font-size:13px;line-height:16px;color:#1e1e1e;white-space:nowrap;font-weight:bold;">Punto iniziale</div>
<div class="a" style="left:1177.4px;top:529.9px;font-size:13px;line-height:16px;color:#1e1e1e;white-space:nowrap;font-weight:bold;">Punto finale</div>
<div class="a" style="right:216.4000000000001px;top:486.5px;font-size:13px;line-height:16px;color:#1e1e1e;white-space:nowrap;">X:</div>
<div class="a" style="left:1288px;top:486.5px;font-size:13px;line-height:16px;color:#1e1e1e;white-space:nowrap;">20</div>
<div class="a" style="right:216.4000000000001px;top:509.5px;font-size:13px;line-height:16px;color:#1e1e1e;white-space:nowrap;">Y:</div>
<div class="a" style="left:1288px;top:509.5px;font-size:13px;line-height:16px;color:#1e1e1e;white-space:nowrap;">20</div>
<div class="a" style="right:216.4000000000001px;top:550.5px;font-size:13px;line-height:16px;color:#1e1e1e;white-space:nowrap;">X:</div>
<div class="a" style="left:1288px;top:550.5px;font-size:13px;line-height:16px;color:#1e1e1e;white-space:nowrap;">70</div>
<div class="a" style="right:216.4000000000001px;top:573.5px;font-size:13px;line-height:16px;color:#1e1e1e;white-space:nowrap;">Y:</div>
<div class="a" style="left:1288px;top:573.5px;font-size:13px;line-height:16px;color:#1e1e1e;white-space:nowrap;">50</div>
<div class="a" style="left:1175.4px;top:604.9px;font-size:12px;line-height:16px;color:#1e1e1e;white-space:nowrap;">Personalizzato</div>
<div class="a" style="left:1168px;top:619.4px;width:274px;height:52.2px;background:#e3e3e3;border:1px solid #dedede;border-radius:6px"></div>
<div class="a" style="left:1405px;top:635px;width:22px;height:21.6px;background:linear-gradient(#f8f8f8,#ececec);border:1px solid #a4a4a4"></div>
<svg class="a" style="left:1405px;top:635px" width="22" height="22" viewBox="0 0 22 22"><path d="M6.5 11 H15.5 M11 6.5 V15.5" stroke="#d00000" stroke-width="2.2"/></svg>
<svg class="a" style="left:1455px;top:107px" width="45" height="691" viewBox="1455 107 45 691">
<defs><linearGradient id="rtbg" x1="0" y1="0" x2="1" y2="0"><stop offset="0" stop-color="#ebebeb"/><stop offset="0.55" stop-color="#e0e0e0"/><stop offset="1" stop-color="#c4c4c4"/></linearGradient><linearGradient id="fun" x1="0" y1="0" x2="1" y2="0"><stop offset="0" stop-color="#777"/><stop offset="0.5" stop-color="#ccc"/><stop offset="1" stop-color="#666"/></linearGradient></defs>
<rect x="1455" y="107" width="45" height="691" fill="url(#rtbg)"/>
<rect x="1454.5" y="107" width="1" height="691" fill="#d6d6d6"/>
<rect x="1462" y="116" width="2" height="2" fill="#a8a8a8"/>
<rect x="1468" y="116" width="2" height="2" fill="#a8a8a8"/>
<rect x="1474" y="116" width="2" height="2" fill="#a8a8a8"/>
<rect x="1480" y="116" width="2" height="2" fill="#a8a8a8"/>
<rect x="1486" y="116" width="2" height="2" fill="#a8a8a8"/>
<line x1="1458" y1="261.5" x2="1500" y2="261.5" stroke="#666" stroke-width="1" stroke-dasharray="1 2"/>
<line x1="1458" y1="410.5" x2="1500" y2="410.5" stroke="#666" stroke-width="1" stroke-dasharray="1 2"/>
<rect x="1456" y="120" width="42.6" height="43" rx="6" fill="#b6b6b6"/>
<rect x="1456" y="269" width="42.6" height="43" rx="6" fill="#b6b6b6"/>
<rect x="1456" y="418" width="42.6" height="43" rx="6" fill="#b6b6b6"/>
<rect x="1463.5" y="127.5" width="27" height="27" fill="#fff" stroke="#222" stroke-width="1"/><rect x="1463.5" y="127.5" width="27" height="4" fill="#000"/><rect x="1464.5" y="128" width="3" height="3" fill="#fff"/>
<rect x="1463.5" y="174.5" width="27" height="27" fill="#fff" stroke="#222" stroke-width="1"/><rect x="1463.5" y="174.5" width="27" height="4" fill="#000"/><rect x="1464.5" y="175" width="3" height="3" fill="#fff"/>
<rect x="1463.5" y="220.5" width="27" height="27" fill="#fff" stroke="#222" stroke-width="1"/><rect x="1463.5" y="220.5" width="27" height="4" fill="#000"/><rect x="1464.5" y="221" width="3" height="3" fill="#fff"/>
<rect x="1463.5" y="276.5" width="27" height="27" fill="#fff" stroke="#222" stroke-width="1"/><rect x="1463.5" y="276.5" width="27" height="4" fill="#000"/><rect x="1464.5" y="277" width="3" height="3" fill="#fff"/>
<rect x="1463.5" y="323.5" width="27" height="27" fill="#fff" stroke="#222" stroke-width="1"/><rect x="1463.5" y="323.5" width="27" height="4" fill="#000"/><rect x="1464.5" y="324" width="3" height="3" fill="#fff"/>
<rect x="1463.5" y="370.0" width="27" height="27" fill="#fff" stroke="#222" stroke-width="1"/><rect x="1463.5" y="370.0" width="27" height="4" fill="#000"/><rect x="1464.5" y="370.5" width="3" height="3" fill="#fff"/>
<rect x="1463.5" y="425.5" width="27" height="27" fill="#fff" stroke="#222" stroke-width="1"/><rect x="1463.5" y="425.5" width="27" height="4" fill="#000"/><rect x="1464.5" y="426" width="3" height="3" fill="#fff"/>
<rect x="1463.5" y="472.5" width="27" height="27" fill="#fff" stroke="#222" stroke-width="1"/><rect x="1463.5" y="472.5" width="27" height="4" fill="#000"/><rect x="1464.5" y="473" width="3" height="3" fill="#fff"/>
<path d="M1471 139 L1476 136 V149 L1471 152 Z" fill="#bbb" stroke="#444" stroke-width="0.8"/>
<path d="M1474 138 L1485 134 V146 L1474 150 Z" fill="#fff" stroke="#444" stroke-width="0.8"/>
<path d="M1477 147 L1482 138 L1482 145 Z" fill="none" stroke="#ff3030" stroke-width="0.9"/>
<rect x="1470.5" y="184.5" width="9" height="7" fill="#f8eec0" stroke="#555" stroke-width="0.8"/>
<circle cx="1479" cy="192.5" r="4.3" fill="#f8eec0" stroke="#555" stroke-width="0.8"/>
<rect x="1469.5" y="229.5" width="15" height="11" rx="2.5" fill="#f4f4f4" stroke="#b8cce6" stroke-width="0.9"/>
<rect x="1466.5" y="285.0" width="3" height="3" fill="#000"/><rect x="1472.5" y="285.0" width="15" height="3" fill="#fff" stroke="#333" stroke-width="0.8"/>
<rect x="1466.5" y="290.3" width="3" height="3" fill="#000"/><rect x="1472.5" y="290.3" width="15" height="3" fill="#fff" stroke="#333" stroke-width="0.8"/>
<rect x="1466.5" y="295.6" width="3" height="3" fill="#000"/><rect x="1472.5" y="295.6" width="15" height="3" fill="#fff" stroke="#333" stroke-width="0.8"/>
<path d="M1469.5 332 H1484.5 L1478.5 339 V346.5 L1475.5 344.5 V339 Z" fill="url(#fun)" stroke="#555" stroke-width="0.7"/>
<path d="M1469.5 378.5 L1474.5 381.0 V388.0 L1469.5 390.5 Z" fill="#fff" stroke="#333" stroke-width="0.8"/>
<rect x="1474.5" y="381.0" width="9" height="7" fill="#999"/>
<line x1="1467" y1="384.5" x2="1487" y2="384.5" stroke="#f08080" stroke-width="0.8" stroke-dasharray="2 1"/>
<rect x="1466" y="433.0" width="11" height="0.9" fill="#999"/>
<rect x="1466" y="436.3" width="10" height="0.9" fill="#999"/>
<rect x="1466" y="439.6" width="12" height="0.9" fill="#999"/>
<rect x="1466" y="442.9" width="12" height="0.9" fill="#999"/>
<line x1="1464" y1="448.5" x2="1490" y2="448.5" stroke="#333" stroke-width="0.7"/>
<rect x="1473" y="449.5" width="14" height="1.2" fill="#777"/>
<rect x="1470.5" y="481" width="13" height="15" rx="1" fill="#c08020" stroke="#8a5a10" stroke-width="0.6"/>
<rect x="1472" y="483" width="10" height="11.5" fill="#f4f4f4"/>
<rect x="1474.5" y="479.5" width="5" height="3" rx="1" fill="#888"/>
<rect x="1473.5" y="486.0" width="7" height="0.8" fill="#bbb"/>
<rect x="1473.5" y="488.5" width="7" height="0.8" fill="#bbb"/>
<rect x="1473.5" y="491.0" width="7" height="0.8" fill="#bbb"/>
</svg>
<div class="a" style="left:583px;top:112.5px;font-size:11.5px;line-height:14px;color:#1e1e1e;white-space:nowrap">* Senza titolo 1</div>
<svg class="a" style="left:94px;top:111px" width="16" height="16" viewBox="0 0 16 16">
<defs><linearGradient id="rig" x1="0" y1="0" x2="1" y2="1"><stop offset="0" stop-color="#a8b4dc"/><stop offset="0.45" stop-color="#2a4090"/><stop offset="1" stop-color="#1c3480"/></linearGradient></defs>
<circle cx="8.2" cy="7.7" r="5.6" fill="#f4f4f4" stroke="url(#rig)" stroke-width="2.1"/>
<path d="M5 8.5 H11 M8 5 V11" stroke="#bbb" stroke-width="0.5"/><path d="M9 5.5 L11 8 M5 10 L8 10.3" stroke="#e89090" stroke-width="0.5"/>
<path d="M8.8 8.3 L13 12.6" stroke="#f0a818" stroke-width="2"/><path d="M9 8.6 L12.6 12.2" stroke="#ffe080" stroke-width="0.6"/><circle cx="13.3" cy="13" r="1.3" fill="#e87070"/>
</svg>
<div class="a" style="left:1134px;top:107px;width:10px;height:691px;background:#ececec"></div>
<div class="a" style="left:1144px;top:107px;width:11px;height:691px;background:#e5e5e5;border-right:1px solid #d6d6d6"></div>
<div class="a" style="left:1135px;top:326.7px;width:20.3px;height:132px;background:#1a84ff;border-radius:5px 0 0 5px"></div>
<div class="a" style="left:1135px;top:463.2px;width:20.3px;height:118.6px;background:#d5d5d5;border-radius:5px 0 0 5px"></div>
<div class="a" style="left:1145.7px;top:392.7px;width:0;height:0"><div style="position:absolute;left:-60px;top:-8px;width:120px;height:16px;text-align:center;transform:rotate(-90deg);font-size:13px;letter-spacing:0.25px;line-height:16px;color:#fff;white-space:nowrap">Editor di proprietà</div></div>
<div class="a" style="left:1145.9px;top:522px;width:0;height:0"><div style="position:absolute;left:-60px;top:-8px;width:120px;height:16px;text-align:center;transform:rotate(-90deg);font-size:13px;letter-spacing:0.1px;line-height:16px;color:#333;white-space:nowrap">Elenco dei livelli</div></div>
<div class="a" style="left:72px;top:747.7px;width:1061px;height:2.3px;background:#c8c8c8"></div>
<div class="a" style="left:72.5px;top:750px;width:1061px;height:20.5px;background:#fff;border-bottom:1px solid #bdbdbd;border-right:1px solid #c8c8c8"></div>
<div class="a" style="left:77.2px;top:750px;font-size:13px;line-height:16px;color:#0c0cf0;white-space:nowrap"><i>Comando:</i> line</div>
<div class="a" style="left:72px;top:771.5px;width:1062px;height:26.5px;background:#ececec"></div>
<div class="a" style="left:73.4px;top:777.4px;font-size:13px;line-height:16px;color:#111;white-space:nowrap">Comando:</div>
<div class="a" style="left:138px;top:775.7px;width:969px;height:18.5px;background:#fff"></div>
<div class="a" style="left:1107.3px;top:772.4px;width:25.4px;height:25.1px;background:linear-gradient(#ececec,#f6f6f6);border:1px solid #b4b4b4"></div>
<svg class="a" style="left:1107px;top:772px" width="26" height="26" viewBox="0 0 26 26"><rect x="6.5" y="8.3" width="13" height="9.5" fill="#ececec" stroke="#333" stroke-width="1"/><rect x="6" y="7.8" width="14" height="3" fill="#111"/><rect x="17" y="8.5" width="1" height="1" fill="#ccc"/></svg>
<div class="a" style="left:70px;top:107px;width:2px;height:691px;background:#bcbcbc"></div>
<div class="a" style="left:0;top:798px;width:1500px;height:46px;background:#dcdcdc"></div>
<div class="st" style="left:2px;top:806.7px">45,35</div>
<div class="st" style="left:2px;top:826.7px">@-25,-15</div>
<div class="a" style="left:253.5px;top:802.4px;width:1px;height:39.2px;background:#8a8a8a"></div>
<div class="st" style="left:256px;top:806.7px">57.0088&lt;38°</div>
<div class="st" style="left:256px;top:826.7px">@29.1548&lt;211°</div>
<div class="st" style="right:801.6px;top:810.7px;text-align:right">Selezionare entità o regione</div>
<div class="st" style="right:801.6px;top:821.7px;text-align:right">Spostare entità o riferimento</div>
<div class="st" style="left:949.1px;top:810.2px">Entità selezionate:</div>
<div class="st" style="left:949.1px;top:821.7px">1 Linea su livello "0"</div>
<svg class="a" style="left:500px;top:798px" width="800" height="46" viewBox="500 798 800 46">
<circle cx="509.6" cy="822" r="2.6" fill="#c6c6c6"/><circle cx="943.3" cy="822" r="2.6" fill="#c6c6c6"/><circle cx="1272.2" cy="822" r="2.6" fill="#c6c6c6"/>
<path d="M726 806.5 C731.5 806.5 734.5 810 734.5 816 V827 C734.5 832.5 731 835.5 726 835.5 C721 835.5 717.5 832.5 717.5 827 V816 C717.5 810 720.5 806.5 726 806.5 Z" fill="#fff" stroke="#555" stroke-width="0.9"/>
<path d="M717.5 818.8 H734.5 M726 806.5 V818.8" stroke="#555" stroke-width="0.9"/>
<rect x="724.3" y="809" width="3.4" height="6.5" rx="1.7" fill="#fff" stroke="#555" stroke-width="0.8"/>
</svg>
</body></html>
